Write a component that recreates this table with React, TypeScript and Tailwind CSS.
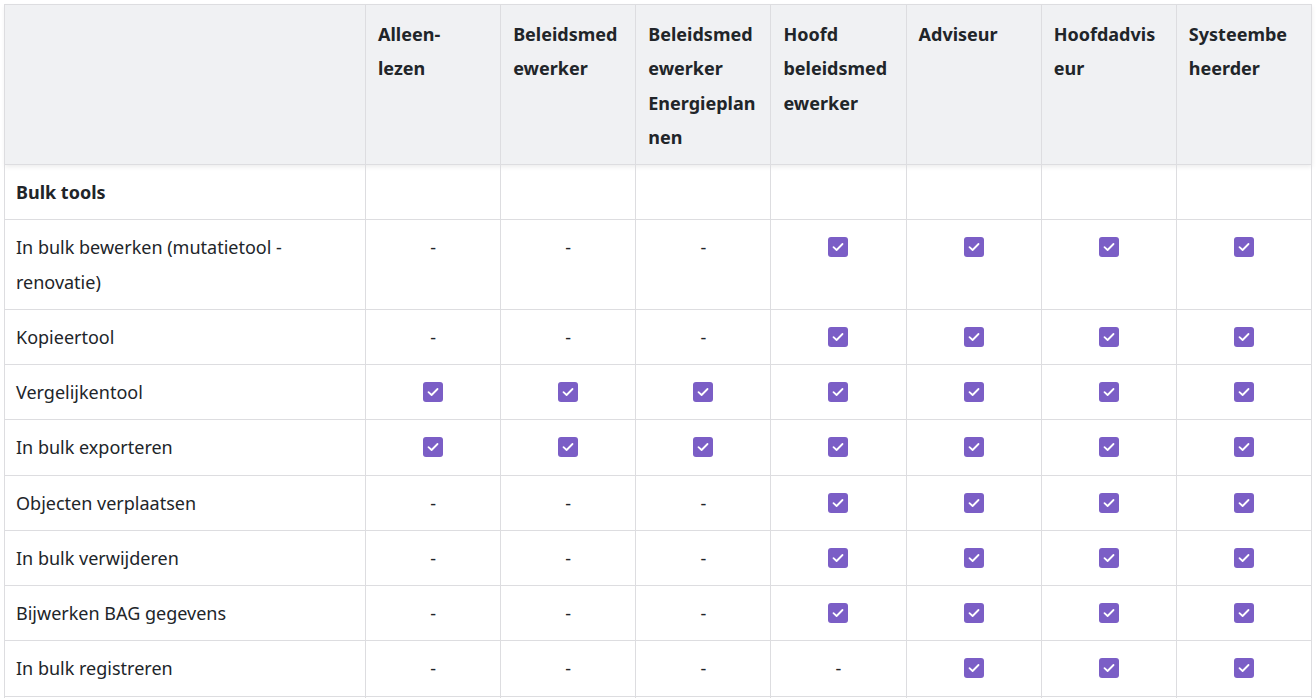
import React from "react";

type Cell = "y" | "n" | "";

const roles: string[][] = [
  ["Alleen-", "lezen"],
  ["Beleidsmed", "ewerker"],
  ["Beleidsmed", "ewerker", "Energieplan", "nen"],
  ["Hoofd", "beleidsmed", "ewerker"],
  ["Adviseur"],
  ["Hoofdadvis", "eur"],
  ["Systeembe", "heerder"],
];

const rows: { label: string[]; cells: Cell[]; section?: boolean }[] = [
  { label: ["Bulk tools"], cells: ["", "", "", "", "", "", ""], section: true },
  { label: ["In bulk bewerken (mutatietool -", "renovatie)"], cells: ["n", "n", "n", "y", "y", "y", "y"] },
  { label: ["Kopieertool"], cells: ["n", "n", "n", "y", "y", "y", "y"] },
  { label: ["Vergelijkentool"], cells: ["y", "y", "y", "y", "y", "y", "y"] },
  { label: ["In bulk exporteren"], cells: ["y", "y", "y", "y", "y", "y", "y"] },
  { label: ["Objecten verplaatsen"], cells: ["n", "n", "n", "y", "y", "y", "y"] },
  { label: ["In bulk verwijderen"], cells: ["n", "n", "n", "y", "y", "y", "y"] },
  { label: ["Bijwerken BAG gegevens"], cells: ["n", "n", "n", "y", "y", "y", "y"] },
  { label: ["In bulk registreren"], cells: ["n", "n", "n", "n", "y", "y", "y"] },
  // next row lies below the fold; only its borders show
  { label: [""], cells: ["", "", "", "", "", "", ""] },
];

function Check() {
  return (
    <span className="inline-flex w-5 h-5 rounded-[3px] bg-[#7b5ec6] items-center justify-center align-top mt-[7px]">
      <svg width="14" height="14" viewBox="0 0 14 14" fill="none">
        <path d="M2.5 7.2 L5.6 10 L11.5 4" stroke="white" strokeWidth="1.8" strokeLinecap="round" strokeLinejoin="round" />
      </svg>
    </span>
  );
}

export default function App() {
  return (
    <div className="p-1 bg-white h-[698px] overflow-hidden" style={{ fontFamily: "'Noto Sans', 'Open Sans', sans-serif" }}>
      <table className="w-full table-fixed border-collapse text-[18px] leading-[34.25px] text-[#212529]">
        <colgroup>
          <col className="w-[361px]" />
          {roles.map((_, i) => (
            <col key={i} />
          ))}
        </colgroup>
        <thead className="shadow-[0_2px_5px_rgba(0,0,0,0.08)]">
          <tr className="bg-[#f0f1f3]">
            <th className="border border-[#dddde0] px-3 pt-3 pb-[10px] align-top text-left"></th>
            {roles.map((r, i) => (
              <th key={i} className="border border-[#dddde0] px-3 pt-3 pb-[10px] align-top text-left font-bold">
                {r.map((l, j) => (
                  <div key={j}>{l}</div>
                ))}
              </th>
            ))}
          </tr>
        </thead>
        <tbody>
          {rows.map((row, i) => (
            <tr key={i} className="h-[55px]">
              <td className={`border border-[#dddde0] pl-[11px] pr-3 py-[10px] align-top ${row.section ? "font-bold" : ""}`}>
                {row.label.map((l, j) => (
                  <div key={j}>{l}</div>
                ))}
              </td>
              {row.cells.map((c, j) => (
                <td key={j} className="border border-[#dddde0] px-3 py-[10px] align-top text-center">
                  {c === "y" ? <Check /> : c === "n" ? "-" : ""}
                </td>
              ))}
            </tr>
          ))}
        </tbody>
      </table>
    </div>
  );
}
